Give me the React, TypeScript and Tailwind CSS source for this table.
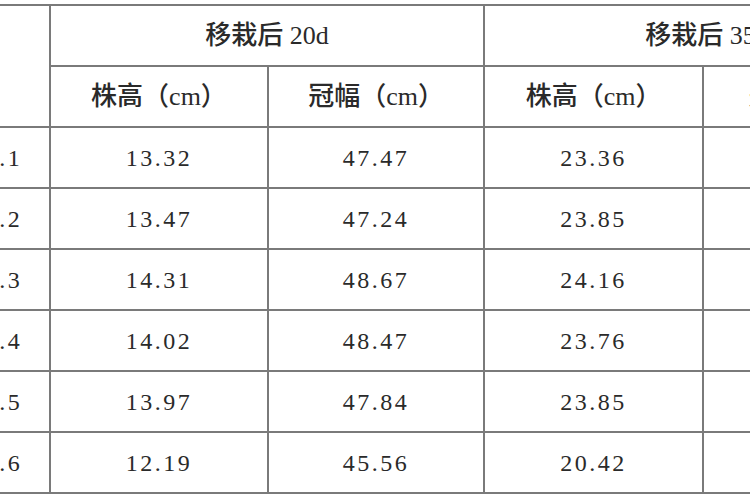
import React from "react";

type Row = {
  label: string;
  h20: string;
  w20: string;
  h35: string;
  w35: string;
};

const ROWS: Row[] = [
  { label: "T1.1", h20: "13.32", w20: "47.47", h35: "23.36", w35: "62.15" },
  { label: "T1.2", h20: "13.47", w20: "47.24", h35: "23.85", w35: "62.48" },
  { label: "T1.3", h20: "14.31", w20: "48.67", h35: "24.16", w35: "63.02" },
  { label: "T1.4", h20: "14.02", w20: "48.47", h35: "23.76", w35: "62.87" },
  { label: "T1.5", h20: "13.97", w20: "47.84", h35: "23.85", w35: "62.31" },
  { label: "T1.6", h20: "12.19", w20: "45.56", h35: "20.42", w35: "58.94" },
];

const cell = "border-2 border-[#7a7a7a] text-center align-middle p-0";
const cjk = "font-['Liberation_Serif','Noto_Sans_CJK_SC',serif] text-[26px] font-medium text-[#2a2a2a]";
const num = "font-['Liberation_Serif',serif] text-[24px] tracking-[2.5px] text-[#2a2a2a]";

export default function App() {
  return (
    <div className="w-[750px] h-[500px] overflow-hidden bg-white">
      <table className="table-fixed border-collapse w-[990px] ml-[-61px] mt-[4px]">
        <colgroup>
          <col className="w-[110px]" />
          <col className="w-[218px]" />
          <col className="w-[216px]" />
          <col className="w-[219px]" />
          <col className="w-[227px]" />
        </colgroup>
        <thead>
          <tr className="h-[61px]">
            <th rowSpan={2} className={`${cell} ${cjk} pr-[22px] pt-[14px]`}>组</th>
            <th colSpan={2} className={`${cell} ${cjk}`}>移栽后 20d</th>
            <th colSpan={2} className={`${cell} ${cjk}`}>移栽后 35d</th>
          </tr>
          <tr className="h-[61px]">
            <th className={`${cell} ${cjk}`}>株高（cm）</th>
            <th className={`${cell} ${cjk}`}>冠幅（cm）</th>
            <th className={`${cell} ${cjk}`}>株高（cm）</th>
            <th className={`${cell} ${cjk}`}>冠幅（cm）</th>
          </tr>
        </thead>
        <tbody>
          {ROWS.map((r) => (
            <tr key={r.label} className="h-[61px]">
              <td className={`${cell} ${num}`}>{r.label}</td>
              <td className={`${cell} ${num}`}>{r.h20}</td>
              <td className={`${cell} ${num}`}>{r.w20}</td>
              <td className={`${cell} ${num}`}>{r.h35}</td>
              <td className={`${cell} ${num}`}>{r.w35}</td>
            </tr>
          ))}
        </tbody>
      </table>
    </div>
  );
}
